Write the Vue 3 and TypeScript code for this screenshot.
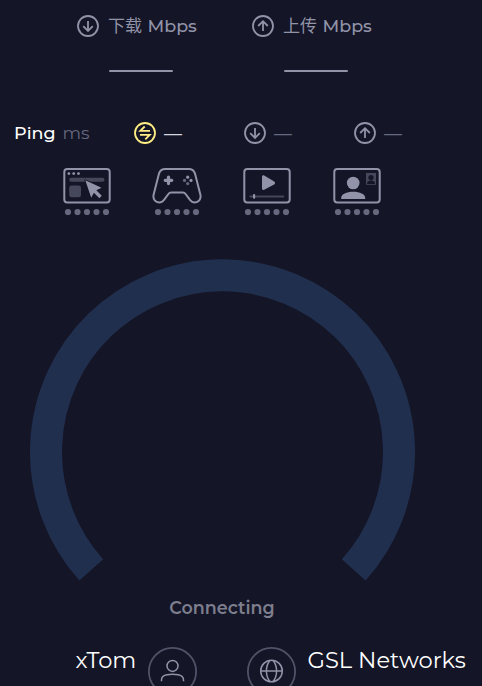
<script setup lang="ts">
type Direction = 'down' | 'up'
type Activity = 'browse' | 'game' | 'video' | 'call'

const speeds: { label: string; dir: Direction }[] = [
  { label: '下载', dir: 'down' },
  { label: '上传', dir: 'up' },
]
const pings: { kind: 'idle' | Direction }[] = [{ kind: 'idle' }, { kind: 'down' }, { kind: 'up' }]
const activities: Activity[] = ['browse', 'game', 'video', 'call']
const dots = [6, 15.5, 25, 34.5, 44]
</script>

<template>
  <main class="page">
    <section class="speeds">
      <div v-for="s in speeds" :key="s.dir" class="speed">
        <svg class="badge" viewBox="0 0 22 22">
          <circle cx="11" cy="11" r="10" />
          <path v-if="s.dir === 'down'" d="M11 6v10M6.2 11.2 11 16l4.8-4.8" />
          <path v-else d="M11 16V6.2M6.2 11 11 6.2l4.8 4.8" />
        </svg>
        <div class="speed-body">
          <div class="speed-title"><span class="cjk">{{ s.label }}</span><span class="unit">Mbps</span></div>
          <div class="bar"></div>
        </div>
      </div>
    </section>

    <section class="pings">
      <div class="ping-title"><span class="name">Ping</span><span class="ms">ms</span></div>
      <div v-for="p in pings" :key="p.kind" class="ping" :class="p.kind">
        <svg class="badge" viewBox="0 0 22 22">
          <circle cx="11" cy="11" r="10" />
          <path v-if="p.kind === 'idle'" d="M10.7 4.5 6.3 8.9H16M6 12.9h9.7L11.3 17.3" />
          <path v-else-if="p.kind === 'down'" d="M11 6v10M6.2 11.2 11 16l4.8-4.8" />
          <path v-else d="M11 16V6.2M6.2 11 11 6.2l4.8 4.8" />
        </svg>
        <span class="dash">—</span>
      </div>
    </section>

    <section class="activities">
      <svg v-for="a in activities" :key="a" viewBox="0 0 50 50">
        <rect v-if="a !== 'game'" class="line" x="2.3" y="3" width="45.4" height="33.6" rx="3" />
        <g v-if="a === 'browse'">
          <g class="solid">
            <circle cx="6.9" cy="7.6" r="1.4" /><circle cx="11.7" cy="7.6" r="1.4" /><circle cx="16.5" cy="7.6" r="1.4" />
          </g>
          <rect class="dim" x="7.2" y="11.8" width="35.3" height="4" rx="2" />
          <rect class="dim" x="7.2" y="19.5" width="11.8" height="11.8" rx="2.3" />
          <path class="solid cut" d="M23.3 14.3 39.5 21.7 34.3 24.3 39.8 29.8 37.4 32.2 31.9 26.7 29.2 31.8Z" />
        </g>
        <g v-else-if="a === 'game'">
          <path class="line" d="M13.3 3h23.4c3.2 0 5.4 1.6 6.3 4.6l5.4 21.2c1 4.8-2.2 7.6-5.5 7.6-2.3 0-4-1-5.5-3.2l-3.8-5.2c-.8-1.2-1.6-1.5-2.8-1.5H19.2c-1.2 0-2 .3-2.8 1.5l-3.8 5.2c-1.5 2.2-3.2 3.2-5.5 3.2-3.3 0-6.5-2.8-5.5-7.6L7 7.6C7.9 4.6 10.1 3 13.3 3Z" />
          <path class="cross" d="M13.2 14.3h6.6M16.5 11v6.6" />
          <g class="solid">
            <circle cx="35.7" cy="11.2" r="1.6" /><circle cx="39" cy="14.4" r="1.6" />
            <circle class="mid" cx="32.5" cy="14.4" r="1.6" /><circle class="mid" cx="35.7" cy="17.6" r="1.6" />
          </g>
        </g>
        <g v-else-if="a === 'video'">
          <path class="solid" d="M20 10.9c0-1.4 1.2-1.9 2.2-1.3l10 5.9c1.2.7 1.2 2.3 0 3l-10 5.2c-1 .6-2.2.1-2.2-1.2Z" />
          <rect class="dim" x="7.3" y="29.4" width="35" height="2" rx="1" />
          <rect class="solid" x="11" y="28" width="2.2" height="4.7" rx="1" />
        </g>
        <g v-else>
          <circle class="solid" cx="21.2" cy="17" r="6.3" />
          <path class="solid" d="M9.2 33v-1.1c0-3.8 5.3-6.1 12-6.1s12 2.3 12 6.1V33Z" />
          <rect class="dim" x="34" y="7" width="10" height="11.8" />
          <circle class="back" cx="39" cy="11.6" r="2.6" />
          <path class="back" d="M35.1 18v-.8c0-1.6 1.8-2.6 3.9-2.6s3.9 1 3.9 2.6v.8Z" />
        </g>
        <circle v-for="x in dots" :key="x" class="dot" :cx="x" cy="46" r="3.1" />
      </svg>
    </section>

    <svg class="gauge" viewBox="-0.5 0 386 322">
      <path d="M61.8 310.9A176.5 176.5 0 1 1 324.2 310.9" />
    </svg>

    <div class="status">Connecting</div>

    <footer class="hosts">
      <span class="host isp">xTom</span>
      <svg viewBox="0 0 49 49">
        <circle class="ring" cx="24.5" cy="24.5" r="23.6" />
        <circle cx="24.5" cy="18.9" r="5.5" />
        <path d="M13.5 34.2V33c0-3.3 2.4-4.8 5.5-5.300 3.400-.5 7.600-.5 11 0 3.100.5 5.500 2 5.500 5.300v1.200" />
      </svg>
      <svg class="globe" viewBox="0 0 49 49">
        <circle class="ring" cx="24.5" cy="24.5" r="23.6" />
        <circle cx="24.5" cy="24" r="10.8" />
        <path d="M13.700 24h21.600M23 13.300c-4.800 6-4.800 15.400 0 21.400M26 13.300c4.800 6 4.800 15.400 0 21.400" />
      </svg>
      <span class="host server">GSL Networks</span>
    </footer>
  </main>
</template>

<style>
body {
  background: #141526;
}
</style>

<style scoped>
.page {
  box-sizing: border-box;
  width: 482px;
  height: 686px;
  padding-top: 15px;
  overflow: hidden;
  background: #141526;
  color: #9193a8;
  font-family: Montserrat, Inter, "Noto Sans CJK SC", sans-serif;
}
svg {
  display: block;
  flex: none;
  fill: none;
}
.speeds {
  display: flex;
  height: 107px;
  padding-left: 77px;
}
.speed {
  display: flex;
  width: 175px;
  gap: 9px;
}
.badge {
  width: 22px;
  height: 22px;
  stroke: currentColor;
  stroke-width: 1.8;
}
.speed-title {
  display: flex;
  align-items: center;
  box-sizing: border-box;
  height: 22px;
  padding-bottom: 2px;
  font-size: 17.5px;
  font-weight: 500;
  white-space: nowrap;
}
.cjk {
  width: 39.5px;
  padding-bottom: 1px;
  font-family: "Noto Sans CJK SC", sans-serif;
  font-size: 17px;
  font-weight: 400;
}
.bar {
  width: 64px;
  height: 2px;
  margin: 33px 0 0 1px;
  border-radius: 1px;
  background: #9193a8;
}
.pings {
  display: flex;
  height: 22px;
  padding-left: 14px;
  align-items: center;
}
.ping-title {
  display: flex;
  width: 120px;
  padding-bottom: 2px;
  font-size: 17.5px;
}
.name {
  width: 48.5px;
  color: #fff;
  font-weight: 500;
}
.ms {
  color: #66687f;
}
.ping {
  display: flex;
  align-items: center;
  width: 110px;
  gap: 8px;
}
.idle .badge {
  color: #ffee83;
}
.dash {
  color: #66687f;
  font-family: "Liberation Sans", sans-serif;
  font-size: 18px;
  line-height: 22px;
}
.idle .dash {
  color: #d5d6df;
}
.activities {
  display: flex;
  gap: 40px;
  padding: 22px 0 0 62px;
}
.activities svg {
  width: 50px;
  height: 50px;
}
.line {
  stroke: #9193a8;
  stroke-width: 2;
}
.solid {
  fill: #9193a8;
}
.cross {
  stroke: #9193a8;
  stroke-width: 3.2;
  stroke-linecap: round;
}
.mid,
.dot {
  fill: #66687d;
}
.dim {
  fill: #45475a;
}
.back {
  fill: #141526;
}
.cut {
  stroke: #141526;
  stroke-width: 1.8;
  stroke-linejoin: round;
  paint-order: stroke;
}
.gauge {
  width: 386px;
  height: 322px;
  margin: 43px 0 0 29px;
  stroke: #212f4e;
  stroke-width: 32;
}
.status {
  width: 444px;
  margin-top: 16px;
  text-align: center;
  color: #7d7e8e;
  font-size: 17.5px;
  font-weight: 600;
  line-height: 22px;
}
.hosts {
  display: flex;
  align-items: flex-start;
  margin-top: 27px;
}
.hosts svg {
  width: 49px;
  height: 49px;
  margin-top: 1px;
  stroke: #9193a8;
  stroke-width: 1.5;
}
.hosts .ring {
  stroke: #505267;
  stroke-width: 1.8;
}
.hosts .globe {
  margin-left: 50px;
}
.host {
  color: #fff;
  font-size: 22.6px;
  font-weight: 400;
  line-height: 28px;
  white-space: nowrap;
}
.isp {
  width: 72.5px;
  padding-left: 75.5px;
}
.server {
  padding-left: 11.5px;
}
</style>
